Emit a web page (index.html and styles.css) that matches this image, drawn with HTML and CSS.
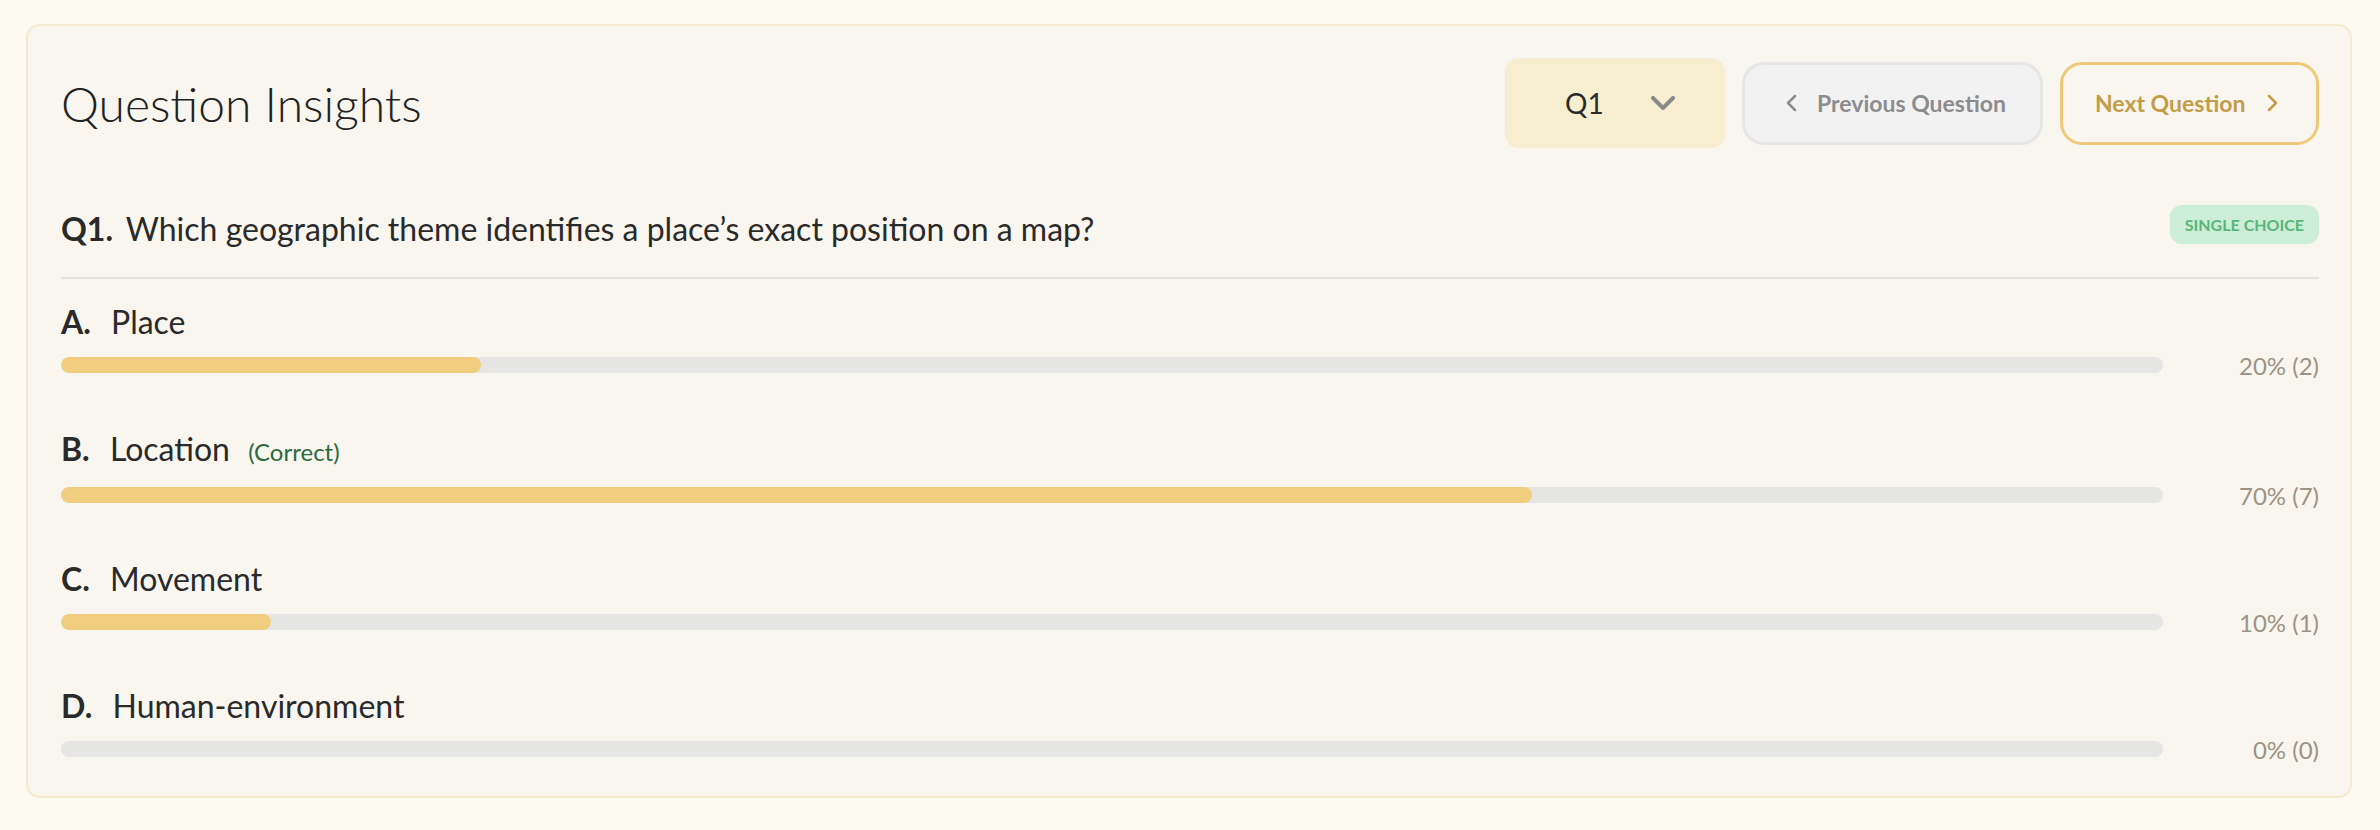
FILE: index.html
```html
<!DOCTYPE html>
<html lang="en">
<head>
  <meta charset="UTF-8">
  <meta name="viewport" content="width=device-width, initial-scale=1.0">
  <title>Question Insights</title>
  <link rel="stylesheet" href="styles.css">
</head>
<body>
  <div class="insights-card">
    <div class="insights-header">
      <h1>Question Insights</h1>
      <div class="controls">
        <div class="question-select">
          <span>Q1</span>
          <svg class="select-chevron" width="24" height="14" viewBox="0 0 24 14"><path d="M2 2l10 10L22 2" fill="none" stroke="currentColor" stroke-width="4" stroke-linecap="round" stroke-linejoin="round"/></svg>
        </div>
        <button class="nav-btn prev-btn">
          <svg width="12" height="18" viewBox="0 0 12 18"><path d="M10 2L3 9l7 7" fill="none" stroke="currentColor" stroke-width="2.5" stroke-linecap="round" stroke-linejoin="round"/></svg>
          Previous Question
        </button>
        <button class="nav-btn next-btn">
          Next Question
          <svg width="12" height="18" viewBox="0 0 12 18"><path d="M2 2l7 7-7 7" fill="none" stroke="currentColor" stroke-width="2.5" stroke-linecap="round" stroke-linejoin="round"/></svg>
        </button>
      </div>
    </div>

    <div class="question-row">
      <p class="question-text"><strong>Q1.</strong> Which geographic theme identifies a place’s exact position on a map?</p>
      <span class="badge">Single choice</span>
    </div>

    <div class="options">
      <div class="option">
        <div class="option-label"><strong>A.</strong> Place</div>
        <div class="option-bar">
          <div class="track"><div class="fill" style="width: 20%"></div></div>
          <span class="percent">20% (2)</span>
        </div>
      </div>
      <div class="option">
        <div class="option-label"><strong>B.</strong> Location <span class="correct">(Correct)</span></div>
        <div class="option-bar">
          <div class="track"><div class="fill" style="width: 70%"></div></div>
          <span class="percent">70% (7)</span>
        </div>
      </div>
      <div class="option">
        <div class="option-label"><strong>C.</strong> Movement</div>
        <div class="option-bar">
          <div class="track"><div class="fill" style="width: 10%"></div></div>
          <span class="percent">10% (1)</span>
        </div>
      </div>
      <div class="option">
        <div class="option-label"><strong>D.</strong> Human-environment</div>
        <div class="option-bar">
          <div class="track"><div class="fill" style="width: 0%"></div></div>
          <span class="percent">0% (0)</span>
        </div>
      </div>
    </div>
  </div>
</body>
</html>
```

FILE: styles.css
```css
body {
  font-family: Lato, "Open Sans", sans-serif;
  background-color: #fdfaf1;
  color: #2a2a2a;
  margin: 0;
  padding: 24px 28px 24px 26px;
}

.insights-card {
  background: #f8f6ee;
  border: 2px solid #f4ebcf;
  border-radius: 14px;
  padding: 32px 31px 32px 33px;
}

.insights-header {
  display: flex;
  justify-content: space-between;
  align-items: center;
  height: 90px;
}

.insights-header h1 {
  margin: 0;
  font-size: 48px;
  font-weight: 300;
  color: #222;
}

.controls {
  display: flex;
  align-items: center;
  gap: 17px;
}

.question-select {
  width: 220px;
  height: 90px;
  box-sizing: border-box;
  padding: 0 50px 0 60px;
  display: flex;
  justify-content: space-between;
  align-items: center;
  background: #f7eecf;
  border-radius: 14px;
  font-size: 28px;
  color: #2a2a2a;
}

.select-chevron {
  color: #8a8a8a;
}

.nav-btn {
  height: 83px;
  box-sizing: border-box;
  display: flex;
  align-items: center;
  gap: 20px;
  border-radius: 22px;
  font-family: Lato, sans-serif;
  font-size: 23px;
  font-weight: 700;
  cursor: pointer;
}

.prev-btn {
  width: 301px;
  padding: 0 30px 0 40px;
  background: #f2f2f2;
  border: 3px solid #e6e6e6;
  color: #8c8c8c;
}

.next-btn {
  width: 259px;
  padding: 0 37px 0 32px;
  justify-content: space-between;
  background: transparent;
  border: 3px solid #f0c978;
  color: #c49c48;
}

.question-row {
  display: flex;
  justify-content: space-between;
  align-items: center;
  height: 40px;
  margin-top: 56px;
  padding-bottom: 33px;
  border-bottom: 2px solid #e5e3dd;
}

.question-text {
  margin: 8px 0 0;
  font-size: 32px;
}

.question-text strong {
  margin-right: 5px;
}

.badge {
  height: 39px;
  box-sizing: border-box;
  padding: 0 15px;
  display: flex;
  align-items: center;
  background: #ccedd7;
  color: #59b679;
  border-radius: 12px;
  font-size: 16px;
  font-weight: 700;
  text-transform: uppercase;
}

.options {
  margin-top: 23px;
  display: flex;
  flex-direction: column;
  gap: 49px;
}

.option-label {
  font-size: 32px;
  line-height: 39px;
}

.option-label strong {
  margin-right: 12px;
}

.correct {
  margin-left: 10px;
  font-size: 24px;
  color: #2e6a3e;
}

.option-bar {
  display: flex;
  align-items: center;
  gap: 24px;
  height: 30px;
  margin-top: 9px;
}

.track {
  flex: 1;
  height: 16px;
  border-radius: 8px;
  background: #e5e5e3;
  overflow: hidden;
}

.fill {
  height: 100%;
  border-radius: 8px;
  background: #f1cd7f;
}

.percent {
  width: 132px;
  text-align: right;
  font-size: 24px;
  color: #9b9385;
}
```
